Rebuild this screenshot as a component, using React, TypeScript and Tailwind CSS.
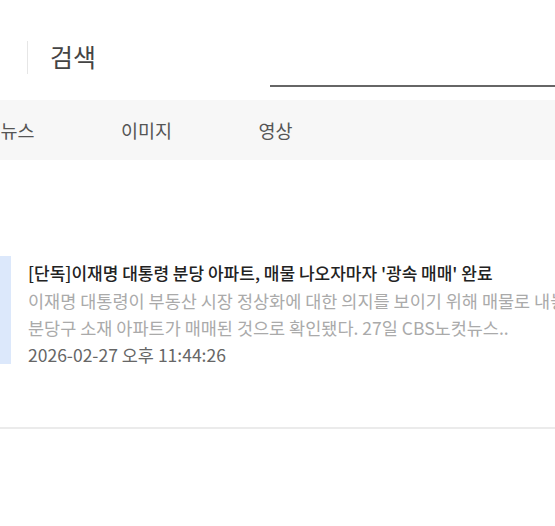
export default function App() {
  const tabs = ["뉴스", "이미지", "영상"];

  return (
    <div className="w-[555px] h-[526px] overflow-hidden bg-white font-['Noto_Sans_CJK_KR','Noto_Sans',sans-serif]">
      {/* search header */}
      <div className="flex h-[100px]">
        <div className="ml-[27px] mt-[41px] h-[33px] border-l border-[#e6e6e6] pl-[22px] text-[25px] leading-[31px] text-[#444]">
          검색
        </div>
        <input
          className="ml-auto mt-[55px] h-[32px] w-[285px] border-b-2 border-[#666] outline-none"
          aria-label="검색어"
        />
      </div>

      {/* tabs */}
      <div className="flex h-[60px] items-center bg-[#f7f7f7] -ml-[47px]">
        {tabs.map((t) => (
          <div key={t} className="w-[129px] text-center text-[18.5px] leading-[26px] text-[#555]">
            {t}
          </div>
        ))}
      </div>

      {/* results */}
      <div className="pt-[96px]">
        <div className="flex items-start">
          <div className="h-[108px] w-[11px] shrink-0 bg-[#dce8fb]" />
          <div className="pl-[17px] pt-[3px] whitespace-nowrap">
            <div className="text-[17px] font-medium leading-[28px] text-[#222]">
              [단독]이재명 대통령 분당 아파트, 매물 나오자마자 '광속 매매' 완료
            </div>
            <div className="text-[17.5px] leading-[27px] text-[#aaa]">
              이재명 대통령이 부동산 시장 정상화에 대한 의지를 보이기 위해 매물로 내놓은 경기도 성남시
            </div>
            <div className="text-[17.5px] leading-[27px] text-[#aaa]">
              분당구 소재 아파트가 매매된 것으로 확인됐다. 27일 CBS노컷뉴스..
            </div>
            <div className="text-[17.5px] leading-[28px] text-[#666]">2026-02-27 오후 11:44:26</div>
          </div>
        </div>
        <div className="mt-[58px] border-b-2 border-[#ebebeb]" />
      </div>
    </div>
  );
}
